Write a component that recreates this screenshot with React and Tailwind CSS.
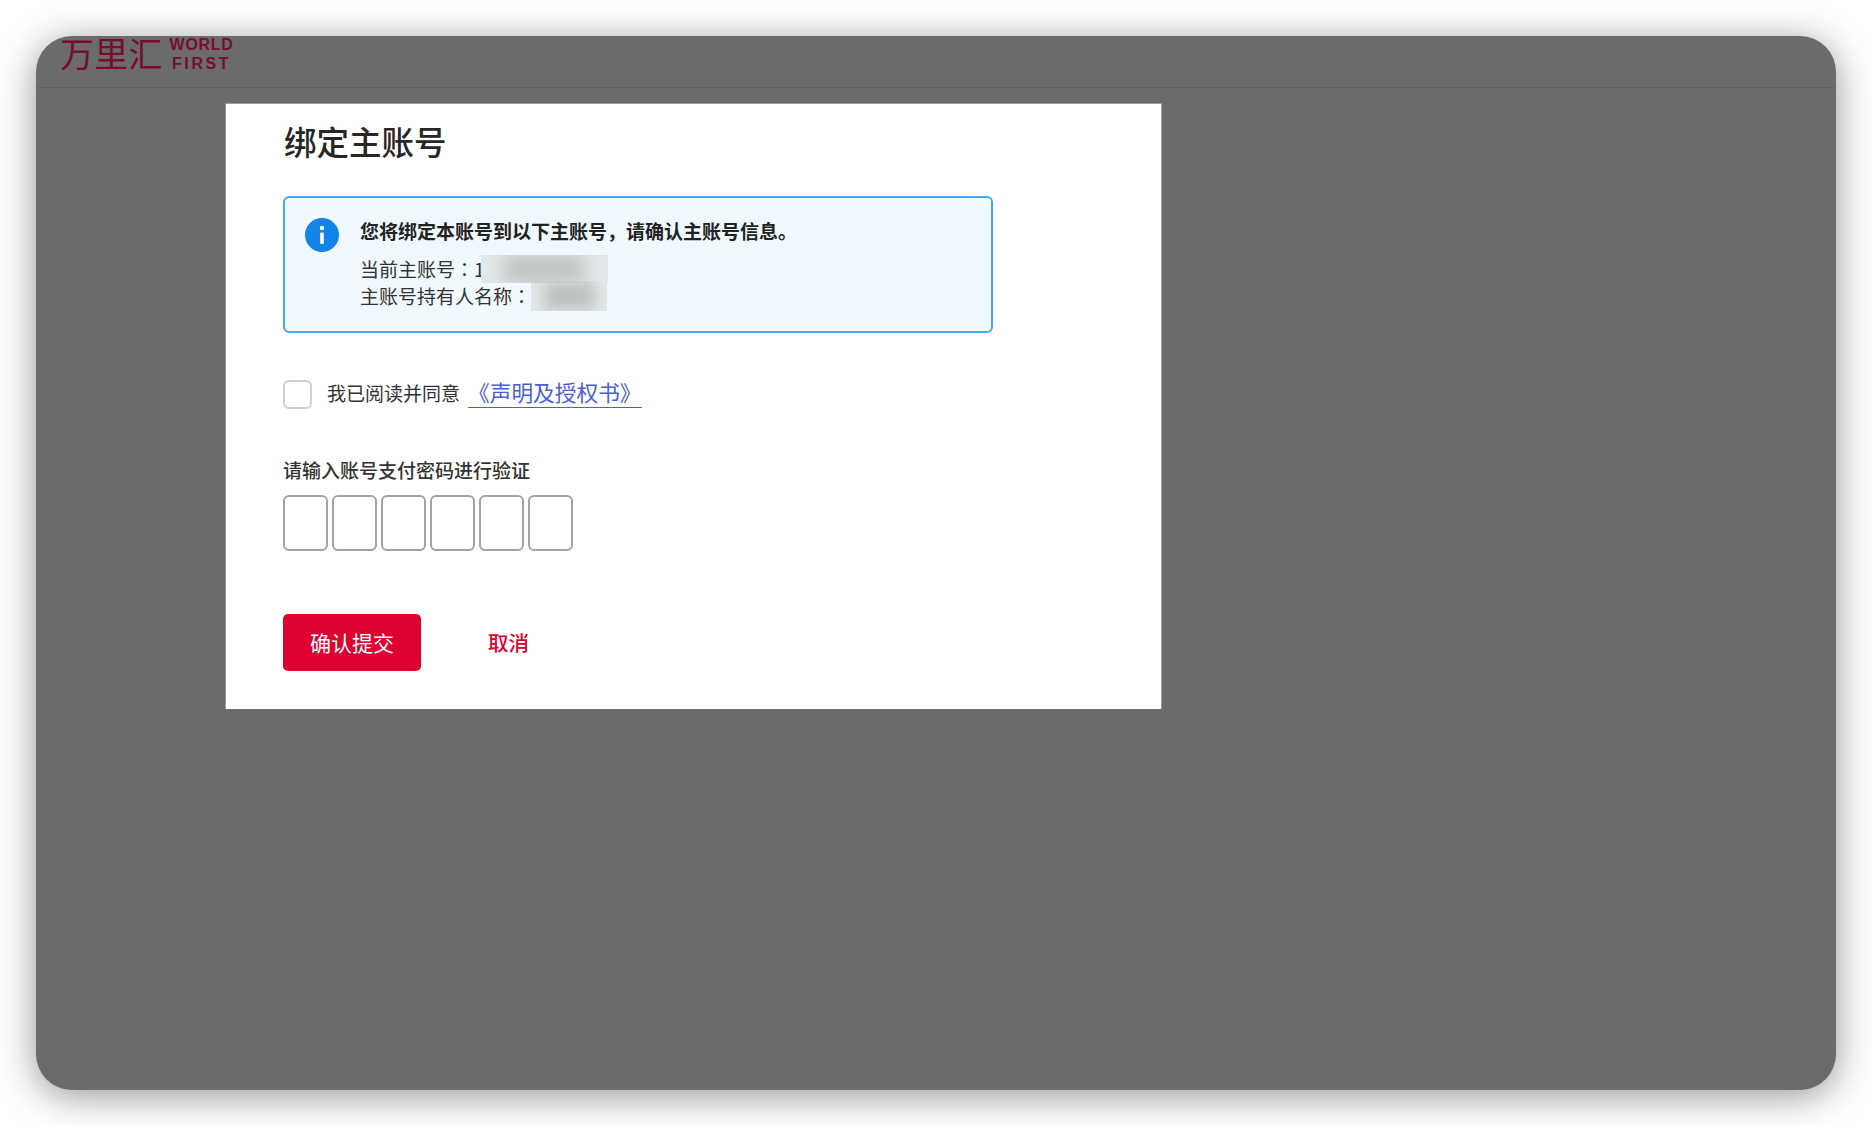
import React from 'react';

const cjk = { fontFamily: '"Noto Sans CJK SC", "Noto Sans", sans-serif' };
const colon = { fontFamily: '"Noto Sans CJK TC", sans-serif' };

export default function App() {
  return (
    <div className="w-[1872px] h-[1126px] bg-white p-[36px] overflow-hidden" style={cjk}>
      <div className="h-[1054px] rounded-[36px] bg-[#6b6b6b] overflow-hidden shadow-[0_6px_38px_rgba(0,0,0,0.42)]">
        {/* Header */}
        <div className="h-[52px] border-b border-[#626262] pl-[24px] flex items-start">
          <span className="text-[34px] leading-[33px] tracking-[0.2px] text-[#7a0c2e] whitespace-nowrap">万里汇</span>
          <div className="ml-[7px] flex flex-col items-center font-bold text-[#7a0c2e] text-[16px] leading-[19px] -mt-[1px] tracking-[0.7px]" style={{ fontFamily: '"Liberation Sans", sans-serif' }}>
            <span>WORLD</span>
            <span className="tracking-[2.6px]">FIRST</span>
          </div>
        </div>

        {/* Dialog */}
        <div className="ml-[189px] mt-[15px] w-[937px] h-[606px] bg-white border-t border-r border-l border-[#999999] pl-[57px]">
          <h1 className="text-[32.5px] leading-[46px] font-medium text-[#262626] mt-[14px] ml-[1px]">绑定主账号</h1>

          <div className="mt-[32px] w-[710px] h-[137px] rounded-[6px] border-2 border-[#45a9f0] bg-[#f0f9ff] flex pl-[20px] pt-[20px]">
            <svg width="34" height="34" viewBox="0 0 34 34" className="shrink-0">
              <circle cx="17" cy="17" r="17" fill="#1283e8" />
              <circle cx="17" cy="10" r="2.2" fill="#fff" />
              <rect x="15.2" y="14.5" width="3.6" height="11.5" rx="1" fill="#fff" />
            </svg>
            <div className="ml-[21px] text-[#333333] text-[19px]">
              <p className="font-bold leading-[26px] text-[#222222] whitespace-nowrap">您将绑定本账号到以下主账号，请确认主账号信息。</p>
              <div className="mt-[11px] flex items-center h-[27px] leading-[27px] whitespace-nowrap">
                <span>当前主账号<span style={colon}>：</span>1</span>
                <span className="-ml-[4px] w-[127px] h-[28px] bg-[#e2e7e8] overflow-hidden flex items-center justify-center">
                  <span className="w-[80px] h-[30px] bg-[#c0c5c5] blur-[8px]"></span>
                </span>
              </div>
              <div className="flex items-center h-[27px] leading-[27px] whitespace-nowrap">
                <span>主账号持有人名称<span style={colon}>：</span></span>
                <span className="w-[76px] h-[30px] bg-[#e2e7e8] overflow-hidden flex items-center justify-center">
                  <span className="w-[50px] h-[28px] bg-[#bcc1c1] blur-[7px]"></span>
                </span>
              </div>
            </div>
          </div>

          <div className="mt-[43px] flex items-center">
            <span className="mt-[4px] w-[29px] h-[29px] rounded-[6px] border-2 border-[#cfcfcf] bg-white"></span>
            <span className="ml-[15px] text-[19px] leading-[30px] text-[#333333]">我已阅读并同意</span>
            <a className="ml-[8px] text-[21.7px] leading-[30px] text-[#4a5ce0] border-b border-[#4a5ce0]">《声明及授权书》</a>
          </div>

          <p className="mt-[47px] text-[19px] leading-[28px] font-medium text-[#333333]">请输入账号支付密码进行验证</p>
          <div className="mt-[11px] flex gap-[4px]">
            {[...Array(6)].map((_, i) => (
              <div key={`pin-${i}`} className="w-[45px] h-[56px] rounded-[6px] border-2 border-[#a3a3a3] bg-white"></div>
            ))}
          </div>

          <div className="mt-[63px] flex items-center">
            <button className="w-[138px] h-[57px] rounded-[5px] bg-[#de0030] text-white text-[21px]">确认提交</button>
            <button className="ml-[67px] text-[#de0030] text-[20.5px] font-medium">取消</button>
          </div>
        </div>
      </div>
    </div>
  );
}
